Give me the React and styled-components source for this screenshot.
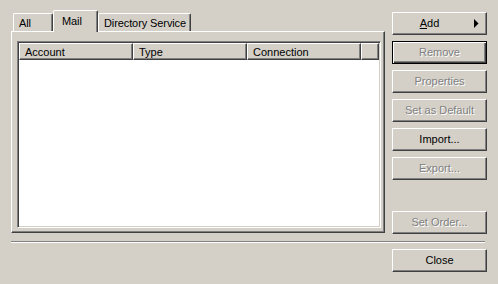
import React from 'react'
import styled, { createGlobalStyle } from 'styled-components'

const GlobalStyle = createGlobalStyle`
  html, body {
    margin: 0;
    padding: 0;
    background: #d4d0c8;
  }
  body {
    font-family: "Liberation Sans", Arial, sans-serif;
    font-size: 11px;
    color: #000;
  }
`

const Dialog = styled.div`
  width: 498px;
  height: 284px;
  box-sizing: border-box;
  padding: 10px 11px 0 11px;
  background: #d4d0c8;
  display: flex;
  flex-direction: column;
`

const TopRow = styled.div`
  display: flex;
  gap: 7px;
  height: 224px;
`

const TabArea = styled.div`
  width: 374px;
  display: flex;
  flex-direction: column;
`

const TabStrip = styled.div`
  display: flex;
  align-items: flex-end;
  height: 21px;
  padding-left: 2px;
  position: relative;
  z-index: 1;
`

const Tab = styled.div`
  box-sizing: border-box;
  width: ${p => p.$w}px;
  height: ${p => (p.$active ? 22 : 18)}px;
  margin-bottom: ${p => (p.$active ? -1 : 0)}px;
  padding: ${p => (p.$active ? '4px 0 0 8px' : '3px 0 0 5px')};
  background: #d4d0c8;
  border-top: 1px solid #fff;
  border-left: 1px solid #fff;
  border-right: 1px solid #404040;
  border-radius: 2px 2px 0 0;
  box-shadow: inset -1px 0 #808080;
  line-height: 13px;
  letter-spacing: -0.1px;
  white-space: nowrap;
`

const Panel = styled.div`
  box-sizing: border-box;
  width: 374px;
  height: 202px;
  padding: 9px 3px 4px 5px;
  border: 1px solid;
  border-color: #fff #404040 #404040 #fff;
  box-shadow: inset -1px -1px #808080;
  background: #d4d0c8;
`

const ListView = styled.div`
  box-sizing: border-box;
  width: 364px;
  height: 187px;
  padding: 1px;
  background: #fff;
  border: 1px solid;
  border-color: #808080 #fff #fff #808080;
  box-shadow: inset 1px 1px #404040, inset -1px -1px #d4d0c8;
`

const Header = styled.div`
  display: flex;
  height: 17px;
`

const HeaderCell = styled.div`
  box-sizing: border-box;
  width: ${p => (p.$w ? `${p.$w}px` : 'auto')};
  flex: ${p => (p.$w ? 'none' : '1')};
  height: 17px;
  padding: 2px 0 0 5px;
  line-height: 13px;
  background: #d4d0c8;
  border: 1px solid;
  border-color: #fff #404040 #404040 #fff;
  box-shadow: inset -1px -1px #808080;
  white-space: nowrap;
`

const ButtonColumn = styled.div`
  display: flex;
  flex-direction: column;
  gap: 6px;
  padding-top: 2px;
`

const Button = styled.div`
  position: relative;
  box-sizing: border-box;
  width: 95px;
  height: 23px;
  display: flex;
  align-items: center;
  justify-content: center;
  padding-right: ${p => (p.$menu ? '20px' : '0')};
  padding-bottom: 1px;
  background: #d4d0c8;
  border: 1px solid;
  border-color: ${p => (p.$default ? '#000' : '#fff #404040 #404040 #fff')};
  box-shadow: ${p =>
    p.$default
      ? 'inset 1px 1px #fff, inset -1px -1px #404040, inset -2px -2px #808080'
      : 'inset -1px -1px #808080'};
  color: ${p => (p.$disabled ? '#808080' : '#000')};
  text-shadow: ${p => (p.$disabled ? '1px 1px #fff' : 'none')};
  margin-top: ${p => (p.$push ? 'auto' : '0')};
  white-space: nowrap;
`

const Arrow = styled.svg`
  position: absolute;
  right: 7px;
  top: 6px;
`

const Separator = styled.div`
  margin: 7px 2px 0 0;
  border-top: 1px solid #808080;
  border-bottom: 1px solid #fff;
`

const BottomRow = styled.div`
  display: flex;
  justify-content: flex-end;
  margin-top: 6px;
`

export default function App() {
  return (
    <>
      <GlobalStyle />
      <Dialog>
        <TopRow>
          <TabArea>
            <TabStrip>
              <Tab $w={40}>All</Tab>
              <Tab $w={45} $active>Mail</Tab>
              <Tab $w={93}>Directory Service</Tab>
            </TabStrip>
            <Panel>
              <ListView>
                <Header>
                  <HeaderCell $w={114}>Account</HeaderCell>
                  <HeaderCell $w={114}>Type</HeaderCell>
                  <HeaderCell $w={114}>Connection</HeaderCell>
                  <HeaderCell />
                </Header>
              </ListView>
            </Panel>
          </TabArea>
          <ButtonColumn>
            <Button $menu>
              <span><u>A</u>dd</span>
              <Arrow width="5" height="9" viewBox="0 0 5 9">
                <polygon points="0,0 4.5,4.5 0,9" fill="#000" />
              </Arrow>
            </Button>
            <Button $default $disabled>Remove</Button>
            <Button $disabled>Properties</Button>
            <Button $disabled>Set as Default</Button>
            <Button>Import...</Button>
            <Button $disabled>Export...</Button>
            <Button $disabled $push>Set Order...</Button>
          </ButtonColumn>
        </TopRow>
        <Separator />
        <BottomRow>
          <Button>Close</Button>
        </BottomRow>
      </Dialog>
    </>
  )
}
